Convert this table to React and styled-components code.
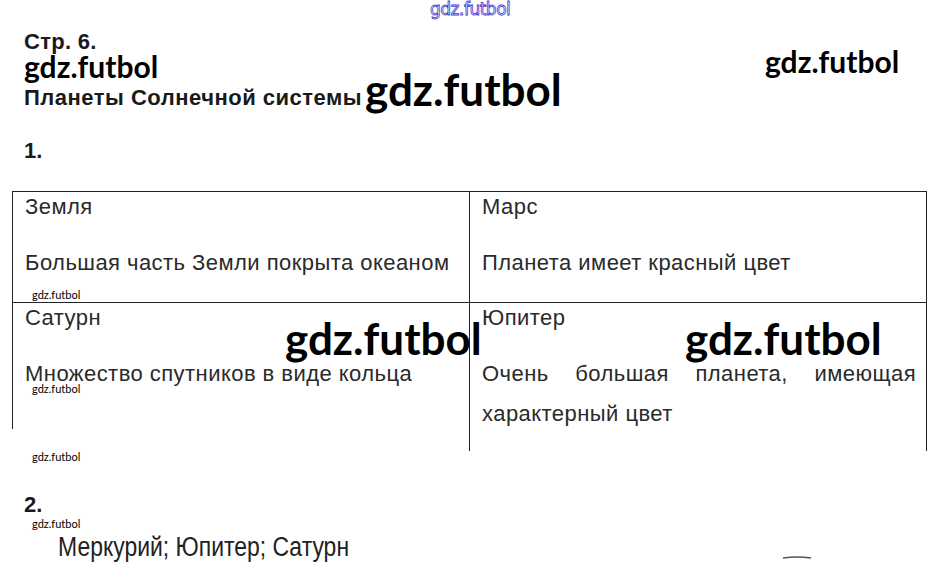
import React from "react";
import styled, { createGlobalStyle } from "styled-components";

const GlobalStyle = createGlobalStyle`
  html, body {
    margin: 0;
    padding: 0;
    background: #ffffff;
  }
  body {
    font-family: "Liberation Sans", Arial, sans-serif;
    color: #1e1e1e;
  }
`;

const Page = styled.div`
  position: relative;
  width: 938px;
  height: 579px;
  overflow: hidden;
  background: #ffffff;
`;

const Header = styled.header`
  display: flex;
  flex-direction: column;
  padding: 32px 0 0 24px;
`;

const PageNum = styled.div`
  font-size: 22px;
  font-weight: 700;
  line-height: 20px;
  letter-spacing: 0.3px;
  color: #1a1a1a;
`;

const Title = styled.h1`
  margin: 5px 0 0;
  font-size: 22px;
  font-weight: 700;
  line-height: 26px;
  letter-spacing: 0.5px;
  color: #1a1a1a;
`;

const TaskNum = styled.div`
  margin: ${({ $top }) => $top}px 0 0 24px;
  font-size: 22px;
  font-weight: 700;
  line-height: 24px;
  color: #1a1a1a;
`;

const Mark = styled.div`
  font-family: Lato, "Open Sans", sans-serif;
  font-weight: ${({ $size }) => ($size < 14 ? 400 : 700)};
  font-size: ${({ $size }) => $size}px;
  line-height: ${({ $lh }) => ($lh ? `${$lh}px` : 1)};
  color: #000;
  white-space: nowrap;
`;

const FloatMark = styled(Mark)`
  position: absolute;
  left: ${({ $x }) => $x}px;
  top: ${({ $y }) => $y}px;
  z-index: 2;
`;

const OutlineMark = styled(FloatMark)`
  font-family: "DejaVu Sans", sans-serif;
  font-weight: 400;
  color: transparent;
  -webkit-text-stroke: 0.8px #3a3ad6;
  letter-spacing: -0.5px;
`;

const Grid = styled.div`
  display: grid;
  grid-template-columns: 457px 458px;
  align-items: start;
  margin: 28px 0 0 12px;
  border-top: 1px solid #222;
  width: 915px;
`;

const Cell = styled.div`
  box-sizing: border-box;
  height: ${({ $h }) => $h}px;
  padding: 2px 10px 0 12px;
  border-left: 1px solid #222;
  border-right: ${({ $last }) => ($last ? "1px solid #222" : "none")};
  border-bottom: ${({ $bottom }) => ($bottom ? "1px solid #222" : "none")};
`;

const Planet = styled.div`
  font-size: 22px;
  line-height: 26px;
  letter-spacing: 0.45px;
  color: #2a2a2a;
`;

const Fact = styled.p`
  margin: 23px 0 0;
  font-size: 22px;
  line-height: 40px;
  letter-spacing: 0.45px;
  color: #2a2a2a;
  text-align: justify;
`;

const Answer = styled.div`
  margin: 15px 0 0 58px;
  font-size: 27px;
  line-height: 30px;
  color: #222;
  transform: scaleX(0.85);
  transform-origin: left;
  white-space: nowrap;
`;

const Smudge = styled.svg`
  position: absolute;
  left: 782px;
  top: 555px;
`;

const cells = [
  { name: "Земля", fact: "Большая часть Земли покрыта океаном", h: 111, bottom: true },
  { name: "Марс", fact: "Планета имеет красный цвет", h: 111, bottom: true, last: true },
  { name: "Сатурн", fact: "Множество спутников в виде кольца", h: 126 },
  { name: "Юпитер", fact: "Очень большая планета, имеющая характерный цвет", h: 148, last: true },
];

const marks = [
  { x: 365, y: 67, size: 44 },
  { x: 765, y: 46, size: 30 },
  { x: 285, y: 316, size: 44 },
  { x: 685, y: 316, size: 44 },
  { x: 32, y: 289, size: 11 },
  { x: 32, y: 383, size: 11 },
  { x: 32, y: 451, size: 11 },
  { x: 32, y: 518, size: 11 },
];

export default function App() {
  return (
    <>
      <GlobalStyle />
      <Page>
        <OutlineMark $x={430} $y={1} $size={17}>gdz.futbol</OutlineMark>
        {marks.map((m, i) => (
          <FloatMark key={i} $x={m.x} $y={m.y} $size={m.size}>gdz.futbol</FloatMark>
        ))}

        <Header>
          <PageNum>Стр. 6.</PageNum>
          <Mark $size={30} $lh={28}>gdz.futbol</Mark>
          <Title>Планеты Солнечной системы</Title>
        </Header>

        <TaskNum $top={28}>1.</TaskNum>
        <Grid>
          {cells.map((c) => (
            <Cell key={c.name} $h={c.h} $bottom={c.bottom} $last={c.last}>
              <Planet>{c.name}</Planet>
              <Fact>{c.fact}</Fact>
            </Cell>
          ))}
        </Grid>

        <TaskNum $top={42}>2.</TaskNum>
        <Answer>Меркурий; Юпитер; Сатурн</Answer>

        <Smudge width="30" height="6" viewBox="0 0 30 6">
          <path d="M1 3 Q15 1 29 3" stroke="#555" strokeWidth="1.4" fill="none" />
        </Smudge>
      </Page>
    </>
  );
}
